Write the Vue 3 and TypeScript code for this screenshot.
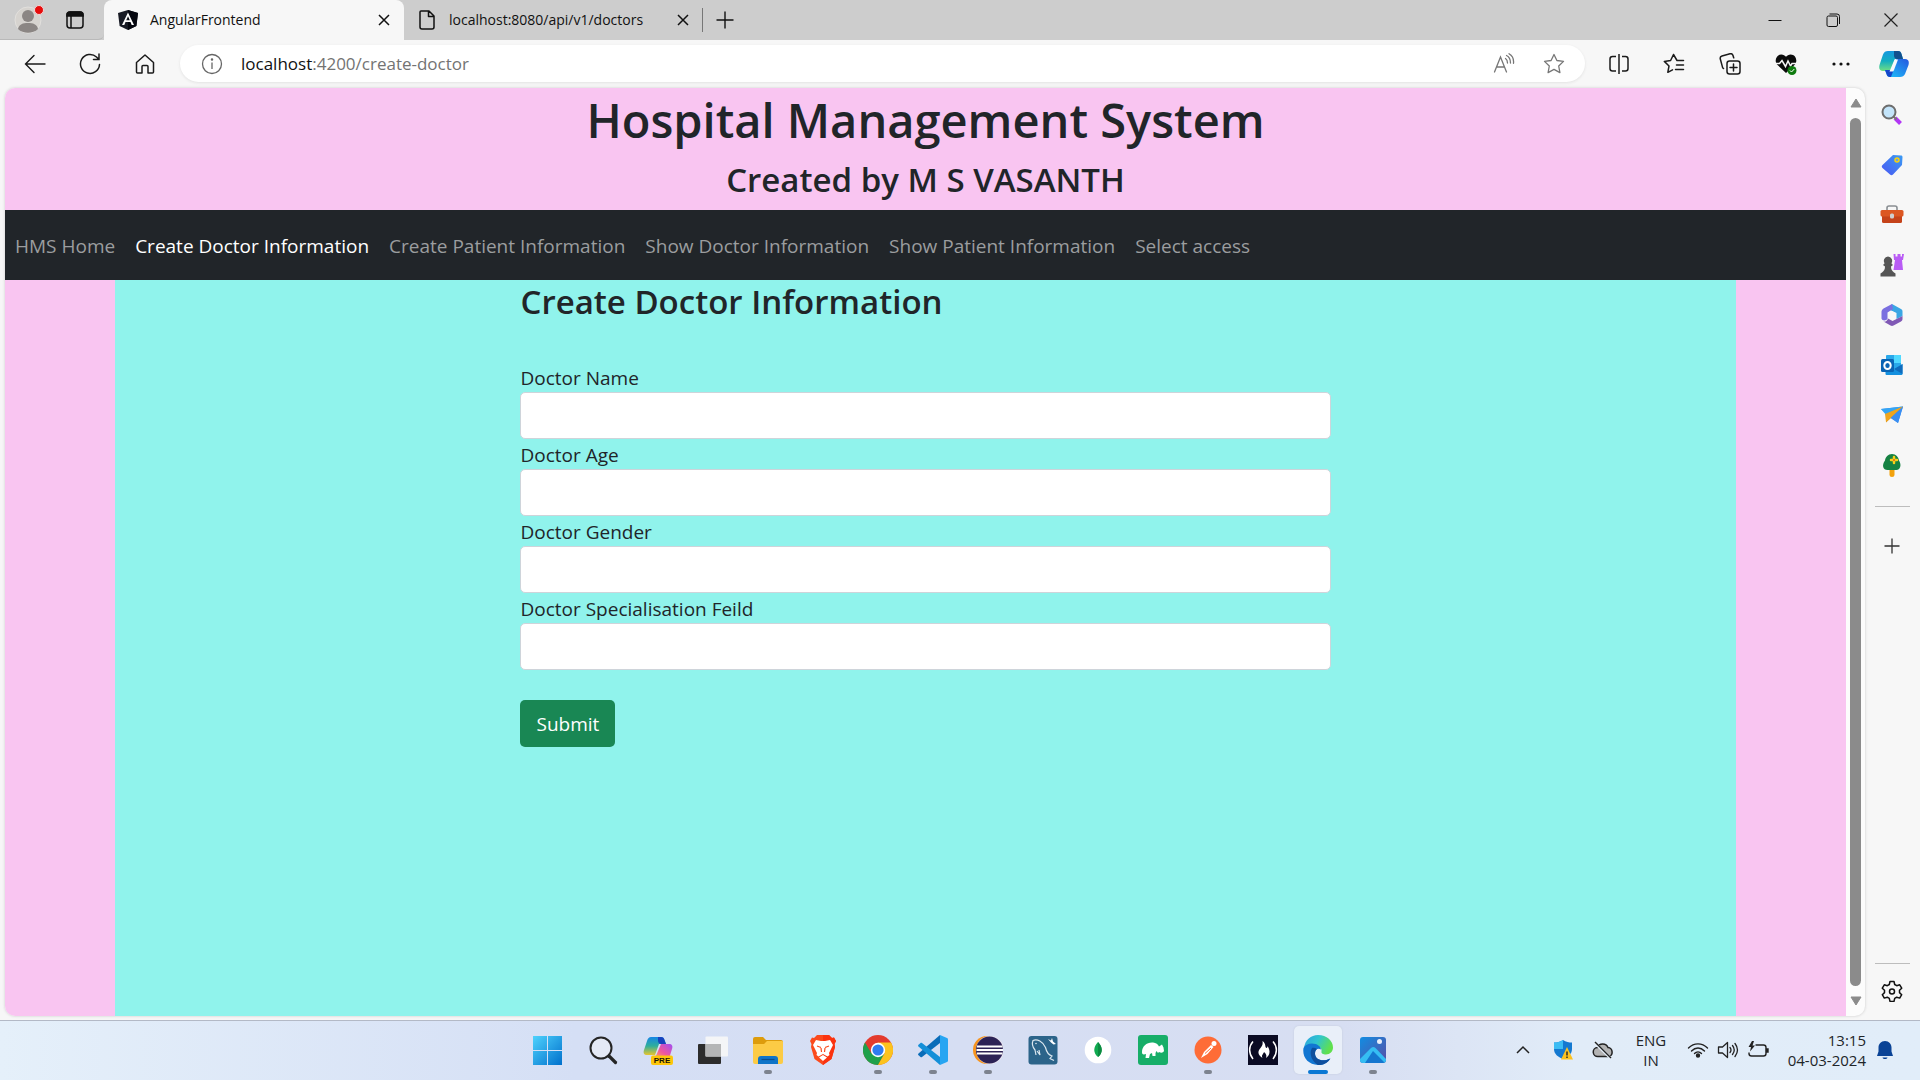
<script setup lang="ts">
import { reactive } from 'vue'

interface NavLink {
  label: string
  path: string
  active?: boolean
}

interface Field {
  id: 'name' | 'age' | 'gender' | 'field'
  label: string
}

const links: NavLink[] = [
  { label: 'HMS Home', path: '#/home' },
  { label: 'Create Doctor Information', path: '#/create-doctor', active: true },
  { label: 'Create Patient Information', path: '#/create-patient' },
  { label: 'Show Doctor Information', path: '#/show-doctor' },
  { label: 'Show Patient Information', path: '#/show-patient' },
  { label: 'Select access', path: '#/access' },
]

const fields: Field[] = [
  { id: 'name', label: 'Doctor Name' },
  { id: 'age', label: 'Doctor Age' },
  { id: 'gender', label: 'Doctor Gender' },
  { id: 'field', label: 'Doctor Specialisation Feild' },
]

const doctor = reactive({ name: '', age: '', gender: '', field: '' })
</script>

<template>
  <div class="desktop">
    <header class="tabstrip">
      <div class="tabstrip-start">
        <button class="icon-btn avatar" aria-label="Profile">
          <svg width="32" height="32" viewBox="0 0 32 32">
            <circle cx="15" cy="16" r="13" fill="#d6d3cf" stroke="#e2e0dd" />
            <circle cx="15" cy="12" r="6" fill="#8b8684" />
            <path d="M5 25c1-5 5-6 10-6s9 1 10 6c-5 5-15 5-20 0z" fill="#8b8684" />
            <circle cx="26" cy="6" r="4.500" fill="#e60c0c" stroke="#f2d6d6" />
          </svg>
        </button>
        <button class="icon-btn" aria-label="Tab actions">
          <svg width="20" height="20" viewBox="0 0 20 20" fill="none" stroke="#111" stroke-width="1.500">
            <rect x="2" y="2" width="16" height="16" rx="3" />
            <path d="M2 5a3 3 0 0 1 3-3h10a3 3 0 0 1 3 3v1H2z" fill="#111" />
            <path d="M6 6v12" />
          </svg>
        </button>
      </div>
      <div class="tab active">
        <svg width="20" height="20" viewBox="0 0 20 20">
          <path d="M10 0l10 3-1.600 13L10 20l-8.400-4L0 3z" fill="#181b25" />
          <path d="M10 0l10 3-1.600 13L10 20z" fill="#05070f" />
          <path d="M10 2.500L4 15h2.300l1.200-3h5l1.200 3H16zM10 6.200l1.800 4H8.200z" fill="#fff" fill-rule="evenodd" />
        </svg>
        <span class="tab-title">AngularFrontend</span>
        <button class="icon-btn close" aria-label="Close tab">
          <svg width="12" height="12" viewBox="0 0 12 12" stroke="#111" stroke-width="1.500"><path d="M1 1l10 10M11 1L1 11" /></svg>
        </button>
      </div>
      <div class="tab">
        <svg width="20" height="20" viewBox="0 0 20 20" fill="none" stroke="#111" stroke-width="1.500" stroke-linejoin="round">
          <path d="M4 1h8l5 5v11a2 2 0 0 1-2 2H5a2 2 0 0 1-2-2V2a1 1 0 0 1 1-1zM11.500 1v5.500H17" />
        </svg>
        <span class="tab-title">localhost:8080/api/v1/doctors</span>
        <button class="icon-btn close" aria-label="Close tab">
          <svg width="12" height="12" viewBox="0 0 12 12" stroke="#111" stroke-width="1.500"><path d="M1 1l10 10M11 1L1 11" /></svg>
        </button>
      </div>
      <span class="tab-divider"></span>
      <button class="icon-btn new-tab" aria-label="New tab">
        <svg width="18" height="18" viewBox="0 0 18 18" stroke="#111" stroke-width="1.400"><path d="M9 .5v17M.5 9h17" /></svg>
      </button>
      <div class="window-controls">
        <button class="icon-btn" aria-label="Minimise">
          <svg width="14" height="14" viewBox="0 0 14 14" stroke="#111"><path d="M.5 7.500h13" /></svg>
        </button>
        <button class="icon-btn" aria-label="Restore">
          <svg width="14" height="14" viewBox="0 0 14 14" fill="none" stroke="#111">
            <rect x="1" y="3" width="10.500" height="10.500" rx="1.500" />
            <path d="M3.500 1H11a2.500 2.500 0 0 1 2.500 2.500V11" />
          </svg>
        </button>
        <button class="icon-btn" aria-label="Close window">
          <svg width="14" height="14" viewBox="0 0 14 14" stroke="#222" stroke-width="1.200"><path d="M.5.5l13 13M13.500.5l-13 13" /></svg>
        </button>
      </div>
    </header>

    <div class="toolbar">
      <div class="toolbar-start">
        <button class="icon-btn" aria-label="Back">
          <svg width="22" height="22" viewBox="0 0 22 22" fill="none" stroke="#1b1b1b" stroke-width="1.400" stroke-linecap="round"><path d="M21 11H1.500M10 2.500L1.500 11l8.500 8.500" /></svg>
        </button>
        <button class="icon-btn" aria-label="Refresh">
          <svg width="22" height="22" viewBox="0 0 22 22" fill="none" stroke="#1b1b1b" stroke-width="1.500" stroke-linecap="round"><path d="M20.500 11.500A9.500 9.500 0 1 1 17.500 4L20 6.500M20 1v5.500h-5.500" /></svg>
        </button>
        <button class="icon-btn" aria-label="Home">
          <svg width="22" height="22" viewBox="0 0 22 22" fill="none" stroke="#1b1b1b" stroke-width="1.500" stroke-linejoin="round"><path d="M2.500 9.500L11 2l8.500 7.500V19a1 1 0 0 1-1 1H14v-6.500a1 1 0 0 0-1-1H9a1 1 0 0 0-1 1V20H3.500a1 1 0 0 1-1-1z" /></svg>
        </button>
      </div>
      <div class="address">
        <button class="icon-btn info" aria-label="Site information">
          <svg width="22" height="22" viewBox="0 0 22 22" fill="none" stroke="#666" stroke-width="1.300"><circle cx="11" cy="11" r="9.500" /><path d="M11 9.500V16" /><circle cx="11" cy="6.500" r=".6" fill="#666" /></svg>
        </button>
        <span class="url"><b>localhost</b>:4200/create-doctor</span>
        <button class="icon-btn" aria-label="Read aloud">
          <svg width="22" height="22" viewBox="0 0 22 22" fill="none" stroke="#767676" stroke-width="1.300" stroke-linecap="round"><path d="M1.500 19L7.500 4l6 15M3.500 14h8M12.500 5.500c1.500 1 2 2.500 2 4.500M13.500 2.500c3 1.500 4 4 4 7.500M16 .8c3.500 2 5 5 4.500 9.500" /></svg>
        </button>
        <button class="icon-btn star" aria-label="Add to favourites">
          <svg width="22" height="22" viewBox="0 0 22 22" fill="none" stroke="#767676" stroke-width="1.300" stroke-linejoin="round"><path d="M11 1.500l2.900 6 6.600.9-4.800 4.600 1.200 6.600-5.900-3.200-5.900 3.200L6.300 13 1.500 8.400l6.600-.9z" /></svg>
        </button>
      </div>
      <div class="toolbar-end">
        <button class="icon-btn" aria-label="Split screen">
          <svg width="22" height="22" viewBox="0 0 22 22" fill="none" stroke="#1b1b1b" stroke-width="1.500"><path d="M11 1v20M8 3.500H4.500a2.500 2.500 0 0 0-2.500 2.500v9.500A2.500 2.500 0 0 0 4.500 18H8M14 3.500h3.500A2.500 2.500 0 0 1 20 6v9.500a2.500 2.500 0 0 1-2.500 2.500H14" /></svg>
        </button>
        <button class="icon-btn" aria-label="Favourites">
          <svg width="22" height="22" viewBox="0 0 22 22" fill="none" stroke="#1b1b1b" stroke-width="1.500" stroke-linejoin="round" stroke-linecap="round"><path d="M20.500 7.500h-6.500L10.500 1.500l-2.900 6-6.300.9 4.700 4.600-1.200 6.300 4.700-2.500M13.500 12h7M12.500 16.500h8" /></svg>
        </button>
        <button class="icon-btn" aria-label="Collections">
          <svg width="22" height="22" viewBox="0 0 22 22" fill="none" stroke="#1b1b1b" stroke-width="1.500" stroke-linecap="round"><rect x="8" y="8" width="13" height="13" rx="2.500" /><path d="M14.500 11v7M11 14.500h7M4.500 15.500l-.8-.6L1.300 6A2.500 2.500 0 0 1 3 3l8-2.200a2.500 2.500 0 0 1 3 1.700l.7 2.300" /></svg>
        </button>
        <button class="icon-btn" aria-label="Browser essentials">
          <svg width="22" height="22" viewBox="0 0 22 22"><path d="M11 20L2 11.500C-1 7.500 1.500 1.500 6.300 1.500c2 0 3.700 1 4.700 2.300 1-1.300 2.700-2.300 4.700-2.300C20.500 1.500 23 7.500 20 11.500z" fill="#0b0b0b" /><path d="M0 10.500h4.500L7 7.500l3.500 6L13 8l2.500 5 1.500-2.500h5" fill="none" stroke="#f7f7f7" stroke-width="1.500" /><circle cx="17" cy="17.500" r="4.500" fill="#0f7b0f" /><path d="M15 17.500l1.500 1.500 2.800-3" fill="none" stroke="#fff" /></svg>
        </button>
        <button class="icon-btn" aria-label="Settings and more">
          <svg width="22" height="22" viewBox="0 0 22 22" fill="#111"><circle cx="4" cy="11" r="1.600" /><circle cx="11" cy="11" r="1.600" /><circle cx="18" cy="11" r="1.600" /></svg>
        </button>
      </div>
      <button class="icon-btn copilot" aria-label="Copilot">
        <svg width="30" height="28" viewBox="0 0 30 28">
          <defs>
            <linearGradient id="cpA" x1="0" y1="0" x2="0" y2="1"><stop offset="0" stop-color="#1597df" /><stop offset=".5" stop-color="#13aec1" /><stop offset="1" stop-color="#70df83" /></linearGradient>
            <linearGradient id="cpB" x1="0" y1="1" x2="1" y2="0"><stop offset="0" stop-color="#1dc6fb" /><stop offset="1" stop-color="#2557df" /></linearGradient>
          </defs>
          <path d="M9 1h10c2 0 3 1 3.500 3L24 9h-8l-4 12H4c-3 0-4.500-2-3.500-6L4 4.500C5 2 6.500 1 9 1z" fill="url(#cpA)" />
          <path d="M15 1h4c2 0 3 1 3.500 3L24 9h-6c-2 0-2.500-1-3-3z" fill="#12508e" />
          <path d="M21 27H11c-2 0-3-1-3.500-3L6 20h7l4.500-11H26c3 0 4.500 2 3.500 6L26 24c-1 2-2.500 3-5 3z" fill="url(#cpB)" />
          <path d="M6 20h6c2 0 2.500 1 1.500 3L12 27h-1c-2 0-3-1-3.500-3z" fill="#1646c9" />
          <path d="M15.500 9.500h3.500l-4 10.500c-.5 1-1 1.500-2 1.500H10.500z" fill="#f7f9fb" />
        </svg>
      </button>
    </div>

    <div class="workspace">
      <div class="viewport">
        <main class="page">
          <div class="banner">
            <h1>Hospital Management System</h1>
            <h3>Created by M S VASANTH</h3>
          </div>
          <nav class="navbar">
            <a v-for="link in links" :key="link.path" :href="link.path" :class="{ current: link.active }">{{ link.label }}</a>
          </nav>
          <section class="container">
            <form class="form" @submit.prevent>
              <h3>Create Doctor Information</h3>
              <div v-for="field in fields" :key="field.id" class="form-group">
                <label :for="field.id">{{ field.label }}</label>
                <input :id="field.id" v-model="doctor[field.id]" type="text" />
              </div>
              <button class="submit" type="submit">Submit</button>
            </form>
          </section>
        </main>
        <div class="scrollbar" aria-hidden="true">
          <svg width="12" height="10" viewBox="0 0 12 10"><path d="M6 1l5 8H1z" fill="#8b8b8b" stroke="#8b8b8b" stroke-linejoin="round" /></svg>
          <span class="thumb"></span>
          <svg width="12" height="10" viewBox="0 0 12 10"><path d="M6 9l5-8H1z" fill="#8b8b8b" stroke="#8b8b8b" stroke-linejoin="round" /></svg>
        </div>
      </div>

      <aside class="sidebar">
        <button class="icon-btn" aria-label="Search">
          <svg width="22" height="22" viewBox="0 0 22 22"><path d="M14 14l5.500 5.500" stroke="#b236f5" stroke-width="4" /><path d="M12.500 12.500l3 3" stroke="#777" stroke-width="2" /><circle cx="8" cy="8" r="6.500" fill="#c3e4fa" stroke="#6d6d6d" stroke-width="2" /></svg>
        </button>
        <button class="icon-btn" aria-label="Shopping">
          <svg width="22" height="22" viewBox="0 0 22 22"><defs><linearGradient id="tag" x1="1" y1="0" x2="0" y2="1"><stop offset="0" stop-color="#3a9bf3" /><stop offset="1" stop-color="#4b57f2" /></linearGradient></defs><path d="M12 1l8 .5c1 0 1.500.6 1.500 1.500L21 11l-9 9.500c-1 1-2 1-3 0L1.500 14c-1-1-1-2 0-3z" fill="url(#tag)" /><circle cx="16" cy="6" r="2" fill="#6fa1dd" stroke="#f8d20e" stroke-width="1.500" /></svg>
        </button>
        <button class="icon-btn" aria-label="Tools">
          <svg width="24" height="22" viewBox="0 0 24 22"><path d="M7 6V4a2 2 0 0 1 2-2h6a2 2 0 0 1 2 2v2" fill="none" stroke="#8a8f93" stroke-width="1.600" /><rect x="2" y="9" width="20" height="10" rx="1.500" fill="#c5431a" /><rect x=".5" y="6" width="23" height="6.500" rx="1.500" fill="#dc5722" /><rect x="10" y="9.500" width="4" height="5" rx="1.500" fill="#cfcfcf" /></svg>
        </button>
        <button class="icon-btn" aria-label="Games">
          <svg width="24" height="24" viewBox="0 0 24 24"><path d="M13.500 1h2v2.500h2V1h3v2.500h1.500V1H24l-1 6h-1l1 10H13.500l1.500-10h-1z" fill="#b95cf5" /><path d="M8 3.500a4.500 4.500 0 0 1 3.500 7L13 12l-2 1.500c0 3 1 4.500 3 6l1.500 1v3H.5v-3l1.500-1c2-1.500 3-3 3-6L3 12l1.500-1.500a4.500 4.500 0 0 1 3.500-7z" fill="#555" /></svg>
        </button>
        <button class="icon-btn" aria-label="Microsoft 365">
          <svg width="22" height="22" viewBox="0 0 22 22"><path d="M11 0l9 5c1 .6 1.500 1.500 1.500 2.500V12l-6 3V9L7 5z" fill="#3aa6e4" /><path d="M11 0L2.500 4.500C1.300 5.200.5 6.500.5 8v6.500C1 17 5 17 6.500 15V8.500L12 5z" fill="#7a6fe0" /><path d="M21.500 12v3c0 1.300-.6 2-1.500 2.500L12.500 21.500c-1 .6-2 .6-3 0l-7-4c2 .5 4-.5 4.500-3l4.500 2.500z" fill="#8059b5" /><path d="M11 7l4 2.200v4L11 15.500l-4-2.300v-4z" fill="#f7f7f7" /></svg>
        </button>
        <button class="icon-btn" aria-label="Outlook">
          <svg width="22" height="22" viewBox="0 0 22 22"><rect x="5" y="1" width="15" height="16" rx="1" fill="#29a8ea" /><path d="M13 1h7v8h-7z" fill="#50d9ff" /><path d="M21.500 10v10a1 1 0 0 1-1 1h-15a1 1 0 0 1-1-1v-9l9 5z" fill="#1490df" /><path d="M21.500 10v10L13 15z" fill="#0f6cbd" /><rect x="0" y="5" width="13" height="13" rx="1.500" fill="#0a64b4" /><ellipse cx="6.500" cy="11.500" rx="3.200" ry="3.500" fill="none" stroke="#fff" stroke-width="2" /></svg>
        </button>
        <button class="icon-btn" aria-label="Drop">
          <svg width="24" height="20" viewBox="0 0 24 20"><path d="M1 4l22-2.500L18 18l-6-4.500z" fill="#2f8df0" /><path d="M1 4l22-2.500L7 11z" fill="#35a5f4" /><path d="M23 1.500L6 9.500v8z" fill="#d28b16" /><path d="M6 17l5.500-4.500L23 1.500 5 9z" fill="#f0a51c" /><path d="M23 1.500L18 18l-7.500-5z" fill="#3a8ef2" /></svg>
        </button>
        <button class="icon-btn" aria-label="Tree">
          <svg width="22" height="24" viewBox="0 0 22 24"><path d="M8.500 15h5v7a2.500 2 0 0 1-5 0z" fill="#f2a20d" /><path d="M11 1c4 0 6.500 3 7 6.500 3 4.500 1 9.500-2.500 9.500h-9C2 17 .5 12 4 7.500 4.500 4 7 1 11 1z" fill="#168243" /><path d="M13 4v6M10 7h6" stroke="#f8d01a" stroke-width="2.500" stroke-linecap="round" /><circle cx="13" cy="7" r="1" fill="#e0621b" /></svg>
        </button>
        <hr />
        <button class="icon-btn" aria-label="Customise sidebar">
          <svg width="16" height="16" viewBox="0 0 16 16" stroke="#333" stroke-width="1.300"><path d="M8 .5v15M.5 8h15" /></svg>
        </button>
        <div class="sidebar-end">
          <hr />
          <button class="icon-btn" aria-label="Settings">
            <svg width="22" height="22" viewBox="0 0 22 22" fill="none" stroke="#111" stroke-width="1.500" stroke-linejoin="round"><path d="M9 1.500h4l.7 3 2 1.200 3-.9 2 3.400-2.200 2.100v2.300l2.200 2.100-2 3.400-3-.9-2 1.200-.7 3H9l-.7-3-2-1.200-3 .9-2-3.400 2.200-2.100v-2.300L1.300 8.200l2-3.400 3 .9 2-1.200z" /><circle cx="11" cy="11.400" r="2.500" /></svg>
          </button>
        </div>
      </aside>
    </div>

    <footer class="taskbar">
      <span></span>
      <div class="apps">
        <button class="app" aria-label="Start">
          <svg viewBox="0 0 30 30"><defs><linearGradient id="win" x1="0" y1="0" x2="1" y2="1"><stop offset="0" stop-color="#4ed2fd" /><stop offset="1" stop-color="#0070cc" /></linearGradient></defs><path d="M0 1h14v14H0zM15 1h14v14H15zM0 16h14v14H0zM15 16h14v14H15z" fill="url(#win)" /></svg>
        </button>
        <button class="app" aria-label="Search">
          <svg viewBox="0 0 30 30" fill="none" stroke="#252525"><circle cx="13" cy="13" r="10.500" fill="#e4e9f5" stroke-width="2" /><path d="M21 21l6.500 6.500" stroke-width="3.200" stroke-linecap="round" /></svg>
        </button>
        <button class="app" aria-label="Copilot">
          <svg viewBox="0 0 30 30">
            <defs>
              <linearGradient id="preA" x1="0" y1="0" x2="0" y2="1"><stop offset="0" stop-color="#1586e6" /><stop offset=".5" stop-color="#2fae9b" /><stop offset="1" stop-color="#e8c52f" /></linearGradient>
              <linearGradient id="preB" x1="1" y1="0" x2="0" y2="1"><stop offset="0" stop-color="#a14ff2" /><stop offset=".6" stop-color="#f0569c" /><stop offset="1" stop-color="#f8a061" /></linearGradient>
            </defs>
            <path d="M8 2h10c2 0 3 1 3.500 3L23 9h-7l-4 11H4c-3 0-4-2-3-5L4 6c1-3 2-4 4-4z" fill="url(#preA)" />
            <path d="M15 2h3c2 0 3 1 3.500 3L23 9h-5c-2 0-2.500-1-3-3z" fill="#1743be" />
            <path d="M18 9h8c3 0 4 2 3 5l-2.500 8H12.500z" fill="url(#preB)" />
            <rect x="8" y="20.500" width="22" height="9.500" rx="2" fill="#fdc60a" />
            <text x="19" y="28" text-anchor="middle" font-size="8" font-weight="700" fill="#1a1503">PRE</text>
          </svg>
        </button>
        <button class="app" aria-label="Task view">
          <svg viewBox="0 0 30 30"><rect x="0" y="9" width="23" height="20" rx="1" fill="#2c2c2c" /><rect x="7.500" y="1.500" width="22.500" height="20" rx="1" fill="#f4f5f7" /><path d="M7.500 9H23v12.500H7.500z" fill="#b4b5b6" /></svg>
        </button>
        <button class="app open" aria-label="File Explorer">
          <svg viewBox="0 0 30 30"><path d="M0 4a2 2 0 0 1 2-2h8l3 3h15a2 2 0 0 1 2 2v5H0z" fill="#dd9c0c" /><path d="M0 9h11l3-3h15a1 1 0 0 1 1 1v20a2 2 0 0 1-2 2H2a2 2 0 0 1-2-2z" fill="#fccb45" /><path d="M5 29v-5a3 3 0 0 1 3-3h14a3 3 0 0 1 3 3v5z" fill="#0f74c8" /><path d="M8.500 24.500h13" stroke="#0a4d8c" stroke-width="1.200" /></svg>
        </button>
        <button class="app" aria-label="Brave">
          <svg viewBox="0 0 30 30"><path d="M9 0h12l3 3 2-.5 2 3.500-1.500 3L27 12l-3.500 12L15 30l-8.500-6L3 12l.5-3L2 6l2-3.500L6 3z" fill="#fb4a1c" /><path d="M15 0h6l3 3 2-.5 2 3.500-1.500 3L27 12l-3.500 12L15 30z" fill="#fb3310" /><path d="M8 5l5 1h4l5-1 3 5-1 2-3 6 .5 2-2 1.500L15 19l-4.500 2.500-2-1.500.5-2-3-6-1-2z" fill="#fff" /><path d="M9 11l4 1.500M21 11l-4 1.500M13 13l.5 4M17 13l-.5 4" stroke="#fb4a1c" stroke-width="1.200" /><path d="M11 22.500l4-2.500 4 2.500-4 3.500z" fill="#fff" /></svg>
        </button>
        <button class="app open" aria-label="Chrome">
          <svg viewBox="0 0 30 30"><circle cx="15" cy="15" r="15" fill="#e33b2e" /><path d="M2 7.500A15 15 0 0 0 15 30l6.500-11.500H8.500z" fill="#1fa04b" /><path d="M28 7.500H15l6.500 11L15 30A15 15 0 0 0 28 7.500z" fill="#fcc31e" /><circle cx="15" cy="15" r="7.200" fill="#fff" /><circle cx="15" cy="15" r="5.600" fill="#2f7cf0" /></svg>
        </button>
        <button class="app open" aria-label="Visual Studio Code">
          <svg viewBox="0 0 30 30"><path d="M22 0v8L4 22c-.6.4-1 .4-1.500 0L.5 20.300c-.6-.6-.6-1.200 0-1.800z" fill="#0a6cb8" /><path d="M22 30v-8L4 8c-.6-.4-1-.4-1.500 0L.5 9.700c-.6.600-.6 1.200 0 1.800z" fill="#148fd8" /><path d="M22 0l7 3c.6.3 1 .8 1 1.500v21c0 .7-.4 1.200-1 1.500l-7 3z" fill="#27a5f2" /></svg>
        </button>
        <button class="app open" aria-label="Eclipse">
          <svg viewBox="0 0 30 30"><circle cx="14" cy="15" r="14" fill="#f7941e" /><circle cx="17" cy="15" r="14" fill="#e8e4f0" /><circle cx="16.500" cy="15" r="13.500" fill="#2c2255" /><path d="M4 11.500h25.500M3.500 15h27M4 18.500h25.500" stroke="#fff" stroke-width="1.800" /></svg>
        </button>
        <button class="app" aria-label="MySQL Workbench">
          <svg viewBox="0 0 30 30"><rect x=".5" y="1" width="29" height="28.500" rx="3" fill="#2c648a" /><path d="M8 20l-1-5C4.500 12 4 8 5 5.500c4-2 10 1 12.500 7C18.500 17 21 20 24 21l-2 2.500 4 2M9 16l3 4-1-5" fill="none" stroke="#dbe7ef" stroke-width="1.200" /><circle cx="8" cy="8.500" r=".8" fill="#dbe7ef" /><path d="M20 4l3 1.500L24 3l1 3.500L28 9l-2.500.5L23 7.500z" fill="#fff" /></svg>
        </button>
        <button class="app" aria-label="MongoDB Compass">
          <svg viewBox="0 0 30 30"><circle cx="15" cy="15" r="13.300" fill="#fff" /><path d="M15 7c5 5 5 11 0 15-5-4-5-10 0-15z" fill="#10aa50" /><path d="M15 7c5 5 5 11 0 15z" fill="#0c8a41" /></svg>
        </button>
        <button class="app" aria-label="Studio 3T">
          <svg viewBox="0 0 30 30"><rect width="30" height="30" rx="3" fill="#17ae68" /><path d="M4 17c0-6 5-10 11-9.500 3 .2 5 2 6 4l3-2 1.500 3L26 16c-1 2-3 2-5 1l-1 1-1.500-2-1 2v3h-3l-.5-3-2 1-1 4H7.500l.5-4-2 .5c-1 .2-2-.8-2-2z" fill="#fff" /></svg>
        </button>
        <button class="app open" aria-label="Postman">
          <svg viewBox="0 0 30 30"><circle cx="15" cy="15" r="13.500" fill="#fe6c37" /><circle cx="21" cy="8.500" r="2.500" fill="#fff" /><path d="M8 23l3-6 7-7 2.500 2-6 7z" fill="#fff" /><path d="M12 18.500l6-5.500" stroke="#fe6c37" /></svg>
        </button>
        <button class="app" aria-label="freeCodeCamp">
          <svg viewBox="0 0 30 30"><path d="M0 0h30v30H0z" fill="#0a0a23" /><path d="M5 6.500c-4.500 5-4.500 12 0 17.500M25 6.500c4.500 5 4.500 12 0 17.500" fill="none" stroke="#fff" stroke-width="1.500" /><path d="M14.500 6c4 3 2 6 4 7 .8.3 1-1 .8-2 4 5 2 10-1.300 12 1-3 0-4-2-6-.5 2-3 3-1.500 6-5-3-5-7-2-10 2-2.500 2.500-4 2-7z" fill="#fff" /></svg>
        </button>
        <button class="app current" aria-label="Edge">
          <svg viewBox="0 0 30 30">
            <defs>
              <linearGradient id="edA" x1="0" y1="0" x2="1" y2=".4"><stop offset="0" stop-color="#2c9fe0" /><stop offset=".5" stop-color="#30c5cf" /><stop offset="1" stop-color="#60e04d" /></linearGradient>
            </defs>
            <path d="M1 13C2 5 8 0 15 0c9 0 15 6 15 12.500 0 4-3 7-7 7-3 0-5-1-4.500-3 .5-3-1.500-5.500-6-5.500-5 0-9 3-11.500 2z" fill="url(#edA)" />
            <path d="M.5 13C2 10 5 8.500 9 8.500c5 0 9 3 9 6-3-2-6 0-6 4 0 6 7 9 15 5-3 5-8 7-12 6.500C5 29.500-1 22 .5 13z" fill="#1276d2" />
            <path d="M9 13c-3 5-1 13 6 17 5 .5 10-2 12.500-6.500-8 4-15.500 1-15.500-5 0-2 .5-3.500 2-4.500-1.500-1-3.500-1.500-5-1z" fill="#0e4f9e" />
          </svg>
        </button>
        <button class="app open" aria-label="Photos">
          <svg viewBox="0 0 30 30"><defs><linearGradient id="pho" x1="0" y1="0" x2="1" y2="1"><stop offset="0" stop-color="#118de2" /><stop offset="1" stop-color="#5a4ea5" /></linearGradient></defs><rect x="2" y="2" width="26" height="26" rx="3" fill="url(#pho)" /><path d="M2 24l11-11c1.500-1.500 3-1.500 4.500 0L28 24v1a3 3 0 0 1-3 3H5a3 3 0 0 1-3-3z" fill="#35bdf3" /><path d="M15 16l11.500 11.500-1.500.5H7z" fill="#1576cf" /><circle cx="21.500" cy="6.500" r="2.500" fill="#e9effa" /></svg>
        </button>
      </div>
      <div class="tray">
        <button class="icon-btn" aria-label="Show hidden icons">
          <svg width="20" height="20" viewBox="0 0 20 20" fill="none" stroke="#222" stroke-width="1.500"><path d="M4 13l6-6 6 6" /></svg>
        </button>
        <button class="icon-btn" aria-label="Windows Security">
          <svg width="20" height="20" viewBox="0 0 20 20"><path d="M10 0c3 2 6 2.500 9 2.500V9c0 5-4 8-9 10-5-2-9-5-9-10V2.500C4 2.500 7 2 10 0z" fill="#1479d0" /><path d="M10 0v9H1V2.500C4 2.500 7 2 10 0z" fill="#3bbcf3" /><path d="M14 7l6 12.500H8z" fill="#fbc21f" /><path d="M14 11.500v4M14 16.500v1.500" stroke="#222" stroke-width="1.400" /></svg>
        </button>
        <button class="icon-btn" aria-label="OneDrive">
          <svg width="22" height="20" viewBox="0 0 22 20"><path d="M6 16.500a4.500 4.500 0 0 1-.5-9C7 3 14 2.500 16 7.500c5 0 6 9 0 9z" fill="#b3b3b3" stroke="#222" stroke-width="1.500" /><path d="M2 2l17 16.500" stroke="#e3edf7" stroke-width="3" /><path d="M3 2l16 16" stroke="#222" stroke-width="1.500" /></svg>
        </button>
        <span class="lang">ENG<br />IN</span>
        <button class="icon-btn" aria-label="Wi-Fi">
          <svg width="22" height="20" viewBox="0 0 22 20" fill="none" stroke="#222" stroke-width="1.400" stroke-linecap="round"><path d="M1.500 8c5.500-5.500 13.500-5.500 19 0M4.500 11c4-4 9-4 13 0M7.500 13.500c2-2 5-2 7 0" /><circle cx="11" cy="15.500" r="1.500" fill="#222" /></svg>
        </button>
        <button class="icon-btn" aria-label="Volume">
          <svg width="22" height="20" viewBox="0 0 22 20" fill="none" stroke="#222" stroke-width="1.300" stroke-linejoin="round" stroke-linecap="round"><path d="M1.500 7h4l5-4.500v15l-5-4.500h-4zM13 7.500q2 2.500 0 5M15.500 5.500q3.500 4.500 0 9M18 3.500q5 6.500 0 13" /></svg>
        </button>
        <button class="icon-btn" aria-label="Battery">
          <svg width="22" height="20" viewBox="0 0 22 20" fill="none" stroke="#222" stroke-width="1.400"><path d="M8.500 5h8A2.500 2.500 0 0 1 19 7.500v6a2.500 2.500 0 0 1-2.500 2.500h-12A2.500 2.500 0 0 1 2 13.500V12.500" /><path d="M19.500 9h1.500v3h-1.500z" fill="#222" /><path d="M5 1L1.500 7H4l-1 4.500L8 5.500H5.500L7 1z" fill="#222" stroke="none" /></svg>
        </button>
        <time>13:15<br />04-03-2024</time>
        <button class="icon-btn bell" aria-label="Notifications">
          <svg width="18" height="20" viewBox="0 0 18 20"><path d="M9 1c4 0 6.500 3 6.500 6.500v4L17 16H1l1.500-4.500v-4C2.500 4 5 1 9 1z" fill="#0a4396" /><path d="M6.500 17.500h5c-.5 2-4.500 2-5 0z" fill="#0a4396" /></svg>
        </button>
      </div>
    </footer>
  </div>
</template>

<style>
body {
  background: #f7f7f7;
}
</style>

<style scoped>
.desktop,
.desktop * {
  box-sizing: border-box;
}

.desktop {
  display: flex;
  flex-direction: column;
  min-height: 100vh;
  background: #f7f7f7;
  color: #212529;
  font-family: 'Open Sans', 'Noto Sans', sans-serif;
}

svg {
  display: block;
  flex: none;
}

.icon-btn {
  display: flex;
  flex: none;
  align-items: center;
  justify-content: center;
  padding: 0;
  border: 0;
  background: none;
}

/* Tab strip */
.tabstrip {
  display: flex;
  height: 40px;
  background: #cdcdcd;
  color: #111;
  font-size: 14px;
}

.tabstrip-start {
  display: flex;
  align-items: center;
  gap: 20px;
  width: 104px;
  padding-left: 13px;
  border-bottom: 1px solid #b9b9b9;
  border-bottom-right-radius: 6px;
}

.tab {
  display: flex;
  align-items: center;
  width: 298px;
  padding: 0 11px 0 13px;
}

.tab.active {
  width: 300px;
  padding: 0 12px 0 14px;
  border-radius: 8px 8px 0 0;
  background: #f7f7f7;
}

.tab-title {
  flex: 1;
  margin-left: 12px;
  line-height: 20px;
  white-space: nowrap;
}

.close {
  width: 16px;
  height: 16px;
}

.tab-divider {
  width: 1px;
  height: 24px;
  margin-top: 8px;
  background: #777;
}

.new-tab {
  width: 44px;
}

.window-controls {
  display: flex;
  margin-left: auto;
}

.window-controls .icon-btn {
  width: 58px;
}

/* Toolbar */
.toolbar {
  display: flex;
  align-items: center;
  height: 48px;
  padding-bottom: 1px;
}

.toolbar-start {
  display: flex;
  justify-content: space-around;
  width: 166px;
  margin: 0 7px;
}

.address {
  display: flex;
  flex: 1;
  align-items: center;
  gap: 28px;
  height: 37px;
  padding: 0 20px 0 21px;
  border-radius: 19px;
  background: #fff;
  box-shadow: 0 1px 3px #e2e2e2;
}

.url {
  flex: 1;
  margin-left: -10px;
  color: #737373;
  font-size: 17px;
  line-height: 22px;
}

.url b {
  color: #111;
  font-weight: 400;
}

.toolbar-end {
  display: flex;
  justify-content: space-around;
  width: 278px;
  margin-left: 6px;
}

.copilot {
  width: 51px;
  padding-right: 2px;
}

/* Browser body */
.workspace {
  display: flex;
  flex: 1;
}

.viewport {
  display: flex;
  flex: 1;
  margin: 0 0 4px 5px;
  overflow: hidden;
  border-radius: 10px;
  background: #fcfcfc;
  box-shadow: 0 0 3px #c8c8c8;
}

.page {
  display: flex;
  flex: 1;
  flex-direction: column;
  background: #f9c5f1;
}

.banner {
  padding: 2px 0 8px;
  text-align: center;
}

h1 {
  margin: 0 0 8px;
  font-size: 47px;
  font-weight: 600;
  line-height: 60px;
}

h3 {
  margin: 0;
  font-size: 33px;
  font-weight: 600;
  line-height: 44px;
}

.navbar {
  display: flex;
  align-items: center;
  height: 70px;
  background: #212529;
}

.navbar a {
  padding: 1px 10px 0;
  color: #9b9d9f;
  font-size: 19px;
  line-height: 30px;
  text-decoration: none;
}

.navbar a.current {
  color: #fff;
}

.container {
  flex: 1;
  width: 88%;
  margin: 0 auto;
  background: #90f3ec;
}

.form {
  width: 50%;
  margin: 0 auto;
}

.form h3 {
  margin-bottom: 38px;
}

.form-group {
  display: flex;
  flex-direction: column;
}

.form-group label {
  padding-top: 2px;
  font-size: 19px;
  line-height: 28px;
}

.form-group input {
  height: 47px;
  padding: 8px 15px;
  border: 1px solid #ced4da;
  border-radius: 5px;
  background: #fff;
  font: inherit;
  font-size: 19px;
}

.submit {
  height: 47px;
  margin-top: 30px;
  padding: 1px 16px 0;
  border: 0;
  border-radius: 5px;
  background: #198754;
  color: #fff;
  font-family: inherit;
  font-size: 19px;
}

.scrollbar {
  display: flex;
  flex-direction: column;
  align-items: center;
  gap: 10px;
  width: 19px;
  padding: 10px 0;
}

.thumb {
  flex: 1;
  width: 11px;
  border-radius: 6px;
  background: #8b8b8b;
}

/* Sidebar */
.sidebar {
  display: flex;
  flex-direction: column;
  align-items: center;
  width: 55px;
  padding: 2px 1px 4px 0;
}

.sidebar .icon-btn {
  width: 50px;
  height: 50px;
}

.sidebar hr {
  width: 35px;
  margin: 16px 0 14px;
  border: 0;
  border-top: 1px solid #bdbdbd;
}

.sidebar-end {
  display: flex;
  flex-direction: column;
  align-items: center;
  margin-top: auto;
}

.sidebar-end hr {
  margin: 0 0 2px;
}

/* Taskbar */
.taskbar {
  display: grid;
  grid-template-columns: 1fr auto 1fr;
  height: 60px;
  border-top: 1px solid #b3b9c6;
  background: linear-gradient(90deg, #e5f0fa, #d5dff5 30%, #d6def3 50%, #d7def2 70%, #e1ecf8 82%, #e1edf9);
}

.apps {
  display: flex;
}

.app {
  display: flex;
  flex-direction: column;
  align-items: center;
  width: 48px;
  height: 48px;
  margin: 5px 3px 0 4px;
  padding: 9px 0 0;
  border: 0;
  border-radius: 5px;
  background: none;
}

.app svg {
  width: 30px;
  height: 30px;
}

.app.open::after,
.app.current::after {
  width: 8px;
  height: 4px;
  margin-top: 5px;
  border-radius: 2px;
  background: #7d838f;
  content: '';
}

.app.current {
  background: #e9eff9;
  box-shadow: 0 0 2px #c3cada;
}

.app.current::after {
  width: 20px;
  background: #0a78d4;
}

.tray {
  display: flex;
  align-items: center;
  justify-content: flex-end;
  padding: 0 26px 2px 0;
  font-size: 15px;
  line-height: 20px;
}

.tray .icon-btn {
  width: 30px;
}

.tray .icon-btn:nth-child(-n + 3) {
  width: 40px;
}

.lang {
  width: 56px;
  margin-right: 4px;
  text-align: center;
}

time {
  width: 93px;
  text-align: right;
}

.tray .bell {
  width: 18px;
  margin-left: 10px;
}
</style>
